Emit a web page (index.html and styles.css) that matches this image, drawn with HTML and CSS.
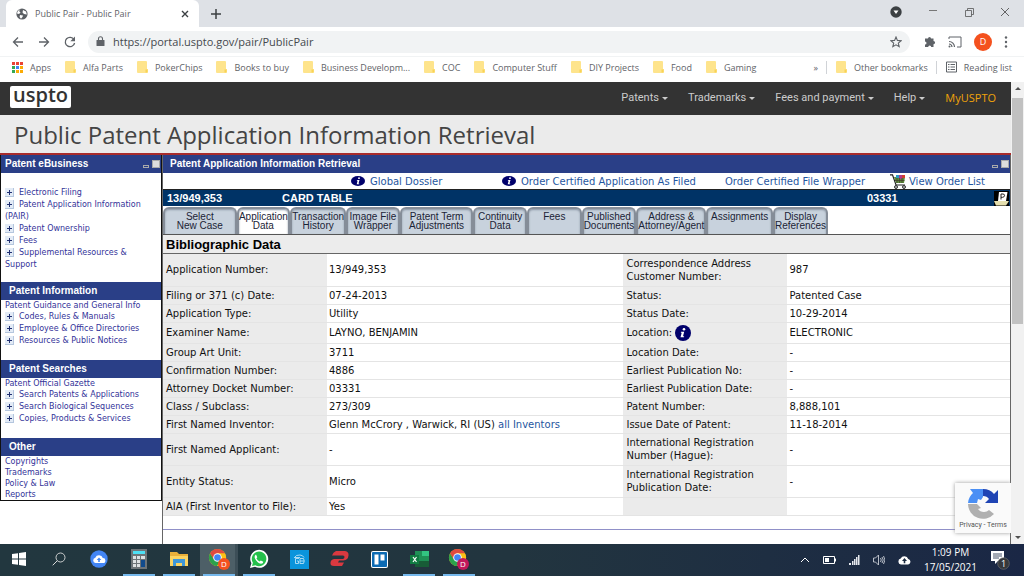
FILE: index.html
```html
<!DOCTYPE html>
<html lang="en">
<head>
  <meta charset="UTF-8" />
  <meta name="viewport" content="width=device-width, initial-scale=1" />
  <title>Public Pair - Public Pair</title>
  <link rel="stylesheet" href="styles.css">
</head>
<body>

<svg class="defs" aria-hidden="true">
  <symbol id="folder" viewBox="0 0 11 12">
    <path d="M1 0h8q1 0 1 1v7h1v3q0 1-1 1H1q-1 0-1-1V1q0-1 1-1z" fill="#fee48c"/>
    <path d="M8.500 8.500h2v3h-2z" fill="#f9d355"/>
  </symbol>
  <symbol id="info" viewBox="0 0 16 16">
    <circle cx="8" cy="8" r="8" fill="#00006b"/>
    <circle cx="9" cy="4.200" r="1.300" fill="#fff"/>
    <path d="M6 6.800h3.200L8 11.300h1.200l-.3 1H5.500l1.200-4.500H5.800z" fill="#fff"/>
  </symbol>
  <symbol id="plus" viewBox="0 0 9 9">
    <path d="M0 0h9v9H0z" fill="#b4c6de"/>
    <path d="M0 0h8v8H0z" fill="#e3ebf6"/>
    <path d="M4 2h1v2h2v1H5v2H4V5H2V4h2z" fill="#1f2f72"/>
  </symbol>
  <symbol id="chrome" viewBox="0 0 20 20">
    <circle cx="10" cy="10" r="9" fill="#fbc116"/>
    <path d="M2.200 5.500A9 9 0 0 0 9.500 19L13.500 12 10 10 6.500 12z" fill="#2ba24c"/>
    <path d="M17.800 5.500H10L14 12l-4 7a9 9 0 0 0 7.800-13.500z" fill="#fbc116"/>
    <path d="M10 5.500h7.800A9 9 0 0 0 2.200 5.500L6 12z" fill="#e04a3f"/>
    <circle cx="10" cy="10" r="4.500" fill="#fff"/>
    <circle cx="10" cy="10" r="3.500" fill="#4285f4"/>
  </symbol>
</svg>

<header class="browser">
  <div class="tabstrip">
    <div class="browser-tab">
      <svg width="12" height="12" viewBox="0 0 12 12"><circle cx="6" cy="6" r="5.600" fill="#5b5f64"/><path d="M4.500 1.200L3 3l1.500 1.500L3 6 1 5.500Q1.200 2.500 4.500 1.200zM7 2l3 1.500.8 3L8 6 6.500 4.500zM4 7l3 .5-.5 1.500L5 10.700 3.600 9z" fill="#fff"/></svg>
      <span class="tab-title">Public Pair - Public Pair</span>
      <button class="icon-btn" aria-label="Close tab"><svg width="8" height="8" viewBox="0 0 8 8"><path d="M1 1l6 6M7 1L1 7" stroke="#3c4043" stroke-width="1.400"/></svg></button>
    </div>
    <button class="icon-btn" aria-label="New tab"><svg width="10" height="10" viewBox="0 0 10 10"><path d="M5 0v10M0 5h10" stroke="#3c4043" stroke-width="1.500"/></svg></button>
    <div class="window-controls">
      <button class="icon-btn" aria-label="Search tabs"><svg width="12" height="12" viewBox="0 0 12 12"><circle cx="6" cy="6" r="5.700" fill="#3c4043"/><path d="M3.500 4.500h5L6 8z" fill="#fff"/></svg></button>
      <button class="icon-btn" aria-label="Minimize"><svg width="10" height="10" viewBox="0 0 10 10"><path d="M1 3.500h8" stroke="#777"/></svg></button>
      <button class="icon-btn" aria-label="Restore"><svg width="10" height="10" viewBox="0 0 10 10"><path d="M1.500 3.500h6v6h-6zM3.500 3.500v-2h6v6h-2" fill="none" stroke="#555" stroke-width=".8"/></svg></button>
      <button class="icon-btn" aria-label="Close"><svg width="10" height="10" viewBox="0 0 10 10"><path d="M1 1l8 8M9 1L1 9" stroke="#555" stroke-width=".9"/></svg></button>
    </div>
  </div>

  <div class="toolbar">
    <button class="icon-btn" aria-label="Back"><svg width="12" height="12" viewBox="0 0 12 12"><path d="M11 6H1.500M6 1.500L1.500 6 6 10.500" fill="none" stroke="#5f6368" stroke-width="1.300"/></svg></button>
    <button class="icon-btn" aria-label="Forward"><svg width="12" height="12" viewBox="0 0 12 12"><path d="M1 6h9.500M6 1.500L10.500 6 6 10.500" fill="none" stroke="#5f6368" stroke-width="1.300"/></svg></button>
    <button class="icon-btn" aria-label="Reload"><svg width="12" height="12" viewBox="0 0 12 12"><path d="M10 3.500A4.700 4.700 0 1 0 10.600 7" fill="none" stroke="#5f6368" stroke-width="1.300"/><path d="M11 .5v4.700H6.300z" fill="#5f6368"/></svg></button>
    <div class="omnibox">
      <svg width="9" height="11" viewBox="0 0 9 11"><path d="M1 4h7q.5 0 .5.500v5q0 .5-.5.500H1q-.5 0-.5-.5v-5Q.500 4 1 4z" fill="#5f6368"/><path d="M2.500 4V2.800a2 2 0 0 1 4 0V4" fill="none" stroke="#5f6368" stroke-width="1.100"/></svg>
      <input type="text" class="url" aria-label="Address" value="https://portal.uspto.gov/pair/PublicPair">
      <button class="icon-btn" aria-label="Bookmark"><svg width="12" height="12" viewBox="0 0 12 12"><path d="M6 1l1.400 3.400 3.700.3-2.800 2.400.9 3.600L6 8.800l-3.200 1.900.9-3.600L.9 4.700l3.700-.3z" fill="none" stroke="#5f6368" stroke-width="1.100"/></svg></button>
    </div>
    <div class="toolbar-end">
      <button class="icon-btn" aria-label="Extensions"><svg width="12" height="12" viewBox="0 0 12 12"><path d="M4 2.500a1.500 1.500 0 0 1 3 0h2.500V5a1.600 1.600 0 0 1 0 3.200V11H7.200a1.500 1.500 0 0 0-3 0H1V8.500a1.500 1.500 0 0 0 0-3v-3z" fill="#5f6368"/></svg></button>
      <button class="icon-btn" aria-label="Cast"><svg width="14" height="12" viewBox="0 0 14 12"><path d="M1 3V1h12v10H9" fill="none" stroke="#5f6368"/><path d="M1 5.500A5.500 5.500 0 0 1 6.500 11M1 8a3 3 0 0 1 3 3" fill="none" stroke="#5f6368" stroke-width="1.200"/><circle cx="1.500" cy="10.500" r="1" fill="#5f6368"/></svg></button>
      <button class="avatar" aria-label="Profile">D</button>
      <button class="icon-btn" aria-label="Menu"><svg width="4" height="12" viewBox="0 0 4 12"><g fill="#5f6368"><circle cx="2" cy="1.500" r="1.200"/><circle cx="2" cy="6" r="1.200"/><circle cx="2" cy="10.500" r="1.200"/></g></svg></button>
    </div>
  </div>

  <nav class="bookmarks" aria-label="Bookmarks">
    <a href="#"><svg width="11" height="11" viewBox="0 0 11 11"><path d="M0 0h3v3H0zM4 0h3v3H4zM8 0h3v3H8z" fill="#ea4335"/><path d="M0 4h3v3H0zM0 8h3v3H0z" fill="#34a853"/><path d="M4 4h3v3H4z" fill="#4285f4"/><path d="M8 4h3v3H8zM4 8h3v3H4zM8 8h3v3H8z" fill="#fbab05"/></svg>Apps</a>
    <a href="#"><svg width="11" height="12"><use href="#folder"/></svg>Alfa Parts</a>
    <a href="#"><svg width="11" height="12"><use href="#folder"/></svg>PokerChips</a>
    <a href="#"><svg width="11" height="12"><use href="#folder"/></svg>Books to buy</a>
    <a href="#"><svg width="11" height="12"><use href="#folder"/></svg>Business Developm...</a>
    <a href="#"><svg width="11" height="12"><use href="#folder"/></svg>COC</a>
    <a href="#"><svg width="11" height="12"><use href="#folder"/></svg>Computer Stuff</a>
    <a href="#"><svg width="11" height="12"><use href="#folder"/></svg>DIY Projects</a>
    <a href="#"><svg width="11" height="12"><use href="#folder"/></svg>Food</a>
    <a href="#"><svg width="11" height="12"><use href="#folder"/></svg>Gaming</a>
    <div class="bookmarks-end">
      <button class="more" aria-label="More bookmarks">»</button>
      <a href="#" class="split"><svg width="11" height="12"><use href="#folder"/></svg>Other bookmarks</a>
      <a href="#" class="split"><svg width="11" height="12" viewBox="0 0 11 12"><path d="M.5 1h10v10H.5z" fill="none" stroke="#5f6368"/><path d="M2 3.500h1.500M4.500 3.500H9M2 6h1.500M4.500 6H9M2 8.500h1.500M4.500 8.500H9" stroke="#5f6368"/></svg>Reading list</a>
    </div>
  </nav>
</header>

<div class="viewport">
  <div class="page">
    <div class="site-header">
      <a href="#" class="logo">uspto</a>
      <nav class="site-nav" aria-label="Site">
        <button>Patents<i class="caret"></i></button>
        <button>Trademarks<i class="caret"></i></button>
        <button>Fees and payment<i class="caret"></i></button>
        <button>Help<i class="caret"></i></button>
        <a href="#" class="my-uspto">MyUSPTO</a>
      </nav>
    </div>
    <h1>Public Patent Application Information Retrieval</h1>

    <div class="frames">
      <aside class="sidebar">
        <div class="sidebar-box">
          <h2 class="bar">Patent eBusiness <span class="box-controls"><i class="min"></i><i class="max"></i></span></h2>
          <ul class="ebusiness">
            <li><svg class="plus"><use href="#plus"/></svg><a href="#">Electronic Filing</a></li>
            <li><svg class="plus"><use href="#plus"/></svg><a href="#">Patent Application Information (PAIR)</a></li>
            <li><svg class="plus"><use href="#plus"/></svg><a href="#">Patent Ownership</a></li>
            <li><svg class="plus"><use href="#plus"/></svg><a href="#">Fees</a></li>
            <li><svg class="plus"><use href="#plus"/></svg><a href="#">Supplemental Resources &amp; Support</a></li>
          </ul>
          <h2 class="bar inner">Patent Information</h2>
          <ul>
            <li class="plain"><a href="#">Patent Guidance and General Info</a></li>
            <li><svg class="plus"><use href="#plus"/></svg><a href="#">Codes, Rules &amp; Manuals</a></li>
            <li><svg class="plus"><use href="#plus"/></svg><a href="#">Employee &amp; Office Directories</a></li>
            <li><svg class="plus"><use href="#plus"/></svg><a href="#">Resources &amp; Public Notices</a></li>
          </ul>
          <h2 class="bar inner">Patent Searches</h2>
          <ul>
            <li class="plain"><a href="#">Patent Official Gazette</a></li>
            <li><svg class="plus"><use href="#plus"/></svg><a href="#">Search Patents &amp; Applications</a></li>
            <li><svg class="plus"><use href="#plus"/></svg><a href="#">Search Biological Sequences</a></li>
            <li><svg class="plus"><use href="#plus"/></svg><a href="#">Copies, Products &amp; Services</a></li>
          </ul>
          <h2 class="bar inner">Other</h2>
          <ul class="other">
            <li class="plain"><a href="#">Copyrights</a></li>
            <li class="plain"><a href="#">Trademarks</a></li>
            <li class="plain"><a href="#">Policy &amp; Law</a></li>
            <li class="plain"><a href="#">Reports</a></li>
          </ul>
        </div>
      </aside>

      <main class="content">
        <h2 class="bar inner">Patent Application Information Retrieval <span class="box-controls"><i class="min"></i><i class="max"></i></span></h2>
        <div class="order-links">
          <a href="#"><svg width="14" height="10" viewBox="0 0 14 10"><ellipse cx="7" cy="5" rx="7" ry="5" fill="#00006b"/><circle cx="8" cy="2.200" r=".9" fill="#fff"/><path d="M6 4h2.500L7.500 7.500h.8l-.2.800H5.700l.9-3.500H5.800z" fill="#fff"/></svg>Global Dossier</a>
          <a href="#"><svg width="14" height="10" viewBox="0 0 14 10"><ellipse cx="7" cy="5" rx="7" ry="5" fill="#00006b"/><circle cx="8" cy="2.200" r=".9" fill="#fff"/><path d="M6 4h2.500L7.500 7.500h.8l-.2.800H5.700l.9-3.500H5.800z" fill="#fff"/></svg>Order Certified Application As Filed</a>
          <a href="#">Order Certified File Wrapper</a>
          <a href="#" class="cart"><svg width="17" height="15" viewBox="0 0 17 15"><path d="M0 .8h2.500L6 11h9" fill="none" stroke="#222" stroke-width="1.200"/><path d="M4 3h11l-1 6H6z" fill="#5c8a3c"/><path d="M6 1h3v3H6z" fill="#2d9bc4"/><path d="M9 1h3v4H9z" fill="#b03a8c"/><path d="M12 1h3v3h-3z" fill="#d23f2e"/><path d="M7 4v5M9.500 4v5M12 4v5M5 6.500h9.500" stroke="#443b2a" stroke-width=".7"/><circle cx="6" cy="13" r="1.500" fill="#bbb" stroke="#333"/><circle cx="14" cy="13" r="1.500" fill="#bbb" stroke="#333"/></svg>View Order List</a>
        </div>
        <div class="case-bar">
          <span>13/949,353</span>
          <span>CARD TABLE</span>
          <span>03331</span>
          <a href="#" aria-label="Printer friendly"><svg width="15" height="15" viewBox="0 0 15 15"><path d="M0 0h15v15H0z" fill="#000"/><path d="M5 1h8.500l-1.500 9H4z" fill="#fff"/><path d="M7 8.500V3h2q1.800.2 1.500 1.700T8.700 6.300H7" fill="none" stroke="#222"/><path d="M0 10h15l-3 4.500H2z" fill="#e5dfae"/></svg></a>
        </div>
        <nav class="tabs" aria-label="Case">
          <a href="#">Select<br>New Case</a>
          <a href="#" class="active">Application<br>Data</a>
          <a href="#">Transaction<br>History</a>
          <a href="#">Image File<br>Wrapper</a>
          <a href="#">Patent Term<br>Adjustments</a>
          <a href="#">Continuity<br>Data</a>
          <a href="#">Fees</a>
          <a href="#">Published<br>Documents</a>
          <a href="#">Address &amp;<br>Attorney/Agent</a>
          <a href="#">Assignments</a>
          <a href="#">Display<br>References</a>
        </nav>
        <h3>Bibliographic Data</h3>
        <table class="biblio">
          <colgroup><col class="col-label"><col class="col-wide"><col class="col-label"><col></colgroup>
          <tr class="tall"><th>Application Number:</th><td>13/949,353</td><th>Correspondence Address Customer Number:</th><td>987</td></tr>
          <tr><th>Filing or 371 (c) Date:</th><td>07-24-2013</td><th>Status:</th><td>Patented Case</td></tr>
          <tr><th>Application Type:</th><td>Utility</td><th>Status Date:</th><td>10-29-2014</td></tr>
          <tr><th>Examiner Name:</th><td>LAYNO, BENJAMIN</td><th>Location: <svg class="info"><use href="#info"/></svg></th><td>ELECTRONIC</td></tr>
          <tr><th>Group Art Unit:</th><td>3711</td><th>Location Date:</th><td>-</td></tr>
          <tr><th>Confirmation Number:</th><td>4886</td><th>Earliest Publication No:</th><td>-</td></tr>
          <tr><th>Attorney Docket Number:</th><td>03331</td><th>Earliest Publication Date:</th><td>-</td></tr>
          <tr><th>Class / Subclass:</th><td>273/309</td><th>Patent Number:</th><td>8,888,101</td></tr>
          <tr><th>First Named Inventor:</th><td>Glenn McCrory , Warwick, RI (US) <a href="#">all Inventors</a></td><th>Issue Date of Patent:</th><td>11-18-2014</td></tr>
          <tr class="tall"><th>First Named Applicant:</th><td>-</td><th>International Registration Number (Hague):</th><td>-</td></tr>
          <tr class="tall"><th>Entity Status:</th><td>Micro</td><th>International Registration Publication Date:</th><td>-</td></tr>
          <tr><th>AIA (First Inventor to File):</th><td>Yes</td><th></th><td></td></tr>
        </table>
        <hr>
      </main>
    </div>

    <div class="recaptcha">
      <svg width="32" height="32" viewBox="0 0 32 32">
        <path d="M1 15A15 15 0 0 1 6 5L3 1h13v8l-2 3-3-1-1 4z" fill="#4a8ff5"/>
        <path d="M16 1q7 0 11 5l4-4v13H18l4-4q-2-3-6-3z" fill="#1f44b4"/>
        <path d="M1 16h9l4 4-3 1q2 3 6 3 3 0 5-2l5 4A15 15 0 0 1 1 16z" fill="#b0b0b0"/>
      </svg>
      <div><a href="#">Privacy</a> - <a href="#">Terms</a></div>
    </div>
  </div>
  <div class="scrollbar"><i class="up"></i><i class="thumb"></i><i class="down"></i></div>
</div>

<footer class="taskbar">
  <div class="apps">
    <button aria-label="Start"><svg width="14" height="14" viewBox="0 0 14 14"><path d="M0 2l6-.8v5.300H0zM7 1l7-1v6.500H7zM0 7.500h6v5.300L0 12zM7 7.500h7V14l-7-1z" fill="#fff"/></svg></button>
    <button aria-label="Search"><svg width="14" height="14" viewBox="0 0 14 14"><circle cx="8.500" cy="5.500" r="4.500" fill="none" stroke="#ddd" stroke-width=".9"/><path d="M5.300 8.700L.7 13.300" stroke="#ddd"/></svg></button>
    <button aria-label="Backup"><svg width="18" height="18" viewBox="0 0 18 18"><circle cx="9" cy="9" r="8.700" fill="#4285f4"/><path d="M5.500 13a2.700 2.700 0 0 1-.2-5.300 4 4 0 0 1 7.500.3 2.500 2.500 0 0 1 .2 5z" fill="#fff"/><path d="M9 7.500L11.300 10H9.800v2H8.200v-2H6.700z" fill="#4285f4"/></svg></button>
    <button class="open" aria-label="Calculator"><svg width="16" height="20" viewBox="0 0 16 20"><path d="M0 0h16v20H0z" fill="#6d7478"/><path d="M2 2h12v3H2z" fill="#4de0f5"/><path d="M2 7h3v3H2zM6 7h3v3H6zM10 7h4v3h-4zM2 11h3v3H2zM6 11h3v3H6zM2 15h3v3H2zM6 15h3v3H6z" fill="#dde1e3"/><path d="M10 11h4v7h-4z" fill="#114b8c"/></svg></button>
    <button class="open" aria-label="File Explorer"><svg width="18" height="16" viewBox="0 0 18 16"><path d="M0 1h7l2 2h9v12H0z" fill="#eab03a"/><path d="M0 5h18v10H0z" fill="#fcd462"/><path d="M3 15V8h12v7h-3v-3H6v3z" fill="#3f97d8"/></svg></button>
    <button class="open current" aria-label="Google Chrome"><svg width="22" height="22" viewBox="0 0 22 22"><use href="#chrome" width="19" height="19"/><circle cx="16" cy="16" r="6" fill="#f4511e"/><text x="16" y="19" class="mark">D</text></svg></button>
    <button class="open" aria-label="WhatsApp"><svg width="20" height="20" viewBox="0 0 20 20"><path d="M1 19l1.400-4.700A9 9 0 1 1 6 17.800z" fill="#fff"/><path d="M3 17l.9-3.200a7.300 7.300 0 1 1 2.500 2.400z" fill="#25c04b"/><path d="M7 5.500l1.300 2.700-.9 1.100q1 2.200 3.200 3.200l1.200-1 2.500 1.200q0 2-2.300 2.100Q8 14.300 5.800 9 5.200 6.400 7 5.500z" fill="#fff"/></svg></button>
    <button aria-label="Design app"><svg width="19" height="19" viewBox="0 0 19 19"><path d="M0 0h19v19H0z" fill="#0a94dc"/><path d="M4 8q2-3.500 6-3 3 .3 4 2.500M5 7.500h5M9 8.500H5.500v5h3v-2.500H7M10 8.500h3.500q1.500 2.500 0 5H10zM10 11h4" fill="none" stroke="#b8e1f5" stroke-width=".9"/></svg></button>
    <button aria-label="Express VPN"><svg width="19" height="16" viewBox="0 0 19 16"><path d="M6 0h9q4 .5 3.500 4.500Q18 9 13.500 9.500H9L8 11.500h6l-2 3.500H4Q0 15 .5 11.500.800 8.500 4 8h9q1.500-.5 1.500-2T13 4.500H2Q3 1 6 0z" fill="#da3940"/></svg></button>
    <button aria-label="Trello"><svg width="17" height="17" viewBox="0 0 17 17"><rect width="17" height="17" rx="2" fill="#fff"/><rect x="1" y="1" width="15" height="15" rx="1" fill="#0c6bb3"/><path d="M3.500 3.500h4v10h-4zM9.500 3.500h4v6h-4z" fill="#fff"/></svg></button>
    <button class="open" aria-label="Excel"><svg width="19" height="18" viewBox="0 0 19 18"><path d="M5 1h14v16H5z" fill="#1f9156"/><path d="M12 1h7v5h-7z" fill="#33c481"/><path d="M5 11h14v6H5z" fill="#185c37"/><path d="M0 5h9v9H0z" fill="#107c41"/><path d="M3 7l3.500 5M6.500 7L3 12" stroke="#fff" stroke-width="1.200"/></svg></button>
    <button class="open" aria-label="Google Chrome, second profile"><svg width="22" height="22" viewBox="0 0 22 22"><use href="#chrome" width="19" height="19"/><circle cx="15" cy="16" r="6" fill="#c2185b"/><text x="15" y="19" class="mark">D</text></svg></button>
  </div>
  <div class="tray">
    <svg width="10" height="6" viewBox="0 0 10 6"><path d="M1 5l4-4 4 4" fill="none" stroke="#fff"/></svg>
    <svg width="13" height="8" viewBox="0 0 13 8"><path d="M.5.500h11v7H.5z" fill="none" stroke="#fff"/><path d="M2 2h4v4H2zM12 2.500h1v3h-1z" fill="#fff"/></svg>
    <svg width="11" height="10" viewBox="0 0 11 10"><path d="M0 8h2v2H0zM3 6h1.500v4H3zM5 4h1.500v6H5zM7 2h1.500v8H7zM9 0h1.500v10H9z" fill="#e6e9ee"/></svg>
    <svg width="12" height="12" viewBox="0 0 12 12"><path d="M.5 4h2l3-3v10l-3-3h-2zM7.500 4q1.500 2 0 4M9 3q2.500 3 0 6M10.500 2q3 4 0 8" fill="none" stroke="#c9ced6" stroke-width=".9"/></svg>
    <svg width="13" height="10" viewBox="0 0 13 10"><path d="M3 9.500A3 3 0 0 1 2.700 3.600a4 4 0 0 1 7.500.4 2.800 2.800 0 0 1 0 5.500z" fill="#fff"/><path d="M6.500 3L9 6H7.300v2.200H5.700V6H4z" fill="#1c2c42"/></svg>
    <div class="clock">1:09 PM<br>17/05/2021</div>
    <button class="notify" aria-label="Notifications"><svg width="20" height="20" viewBox="0 0 20 20"><path d="M1 1h13v10H8l-3 3v-3H1z" fill="#fff"/><path d="M3 4h9M3 6h9M3 8h6" stroke="#1b2a45" stroke-width=".8"/><circle cx="13.500" cy="13.500" r="5.800" fill="#35383c" stroke="#777" stroke-width=".6"/><text x="13.500" y="17" class="mark count">1</text></svg></button>
  </div>
</footer>

</body>
</html>
```
FILE: styles.css
```css
* {
  box-sizing: border-box;
}
body {
  margin: 0;
  height: 100vh;
  display: flex;
  flex-direction: column;
  overflow: hidden;
  background: #fff;
  color: #111;
  font-family: "Open Sans", "Noto Sans", sans-serif;
  font-size: 9px;
}
a {
  color: inherit;
  text-decoration: none;
}
button {
  border: 0;
  padding: 0;
  background: none;
  color: inherit;
  font: inherit;
}
svg {
  display: block;
  flex: none;
}
h1, h2, h3, ul {
  margin: 0;
  padding: 0;
}
.defs {
  position: absolute;
  width: 0;
  height: 0;
}
.mark {
  fill: #fff;
  font-size: 8px;
  text-anchor: middle;
}
.count {
  font-size: 9px;
}

/* browser */
.tabstrip {
  display: flex;
  align-items: center;
  height: 27px;
  padding-left: 6px;
  background: #dee1e6;
}
.browser-tab {
  display: flex;
  align-items: center;
  gap: 7px;
  width: 193px;
  height: 27px;
  padding: 0 10px;
  margin-right: 12px;
  background: #fff;
  border-radius: 6px 6px 0 0;
  color: #5f6368;
}
.tab-title {
  flex: 1;
  white-space: nowrap;
}
.window-controls {
  display: flex;
  align-items: center;
  gap: 26px;
  margin-left: auto;
  padding: 0 14px 3px 0;
}
.toolbar {
  display: flex;
  align-items: center;
  gap: 14px;
  height: 29px;
  padding: 0 16px 0 12px;
}
.omnibox {
  flex: 1;
  display: flex;
  align-items: center;
  gap: 8px;
  height: 22px;
  padding: 0 8px;
  margin-left: -2px;
  border-radius: 11px;
  background: #f1f3f4;
}
.url {
  flex: 1;
  min-width: 0;
  border: 0;
  padding: 0;
  background: none;
  color: #45494d;
  font-family: inherit;
  font-size: 11px;
}
.toolbar-end {
  display: flex;
  align-items: center;
  gap: 12px;
}
.avatar {
  width: 18px;
  height: 18px;
  border-radius: 50%;
  background: #f4511e;
  color: #fff;
  text-align: center;
}
.bookmarks {
  display: flex;
  align-items: center;
  gap: 14px;
  height: 26px;
  padding: 0 12px 5px;
  border-top: 1px solid #f1f3f4;
  color: #5f6368;
  white-space: nowrap;
}
.bookmarks a {
  display: flex;
  align-items: center;
  gap: 7px;
}
.bookmarks-end {
  display: flex;
  align-items: center;
  gap: 8px;
  margin-left: auto;
}
.bookmarks .split {
  padding-left: 9px;
  border-left: 1px solid #d0d3d7;
}

/* page */
.viewport {
  flex: 1;
  min-height: 0;
  display: flex;
}
.page {
  flex: 1;
  min-width: 0;
  position: relative;
  display: flex;
  flex-direction: column;
  overflow: hidden;
}
.site-header {
  display: flex;
  justify-content: space-between;
  align-items: flex-start;
  height: 33px;
  padding: 4px 15px 0 10px;
  background: #333;
}
.logo {
  height: 22px;
  padding: 0 3px;
  border-radius: 2px;
  background: #fff;
  color: #333;
  font-size: 20px;
  font-weight: 600;
  line-height: 18px;
}
.site-nav {
  display: flex;
  gap: 20px;
  color: #ccc;
  font: 11px/24px Roboto, Arial, sans-serif;
}
.caret {
  display: inline-block;
  margin-left: 3px;
  vertical-align: middle;
  border: 3px solid transparent;
  border-top-color: #ccc;
  border-bottom: 0;
}
.my-uspto {
  color: #f0a30a;
  font-family: "Open Sans", sans-serif;
}
h1 {
  height: 40px;
  padding-left: 14px;
  border-bottom: 2px solid #a82c2c;
  background: #ebebeb;
  color: #444;
  font-size: 24px;
  font-weight: 400;
  line-height: 40px;
}
.frames {
  flex: 1;
  min-height: 0;
  display: flex;
}
.bar {
  display: flex;
  align-items: center;
  height: 18px;
  padding-left: 4px;
  background: #2a3f87;
  color: #fff;
  font: bold 10px/18px "Liberation Sans", Arial, sans-serif;
}
.bar.inner {
  padding-left: 8px;
}
.content .bar.inner {
  padding-left: 7px;
}
.box-controls {
  display: flex;
  align-items: flex-end;
  gap: 3px;
  margin-left: auto;
  padding-right: 1px;
}
.box-controls .min {
  width: 6px;
  height: 3px;
  border: 1px solid #aaa;
}
.box-controls .max {
  width: 8px;
  height: 8px;
  border: 1px solid #aaa;
  background: #ddd;
}

.sidebar {
  width: 162px;
}
.sidebar-box {
  border: 1px solid #111;
  border-top: 0;
}
.sidebar ul {
  padding: 0 4px 13px;
  list-style: none;
  color: #333399;
  font: 8px/12px "DejaVu Sans", Verdana, sans-serif;
}
.sidebar .ebusiness {
  padding-top: 14px;
  padding-bottom: 11px;
}
.sidebar .other {
  padding-bottom: 0;
}
.sidebar .plain {
  line-height: 11px;
}
.plus {
  display: inline-block;
  width: 9px;
  height: 9px;
  margin-right: 5px;
  vertical-align: -2px;
}

.content {
  flex: 1;
  min-width: 0;
  border-left: 1px solid #666;
  border-right: 1px solid #666;
}
.order-links {
  display: grid;
  grid-template-columns: 188fr 151fr 223fr 165fr 120fr;
  align-items: center;
  height: 16px;
  color: #1f56a0;
  font: 10px/13px "DejaVu Sans", Verdana, sans-serif;
  white-space: nowrap;
}
.order-links a {
  display: flex;
  align-items: center;
  gap: 5px;
}
.order-links a:first-child {
  grid-column-start: 2;
}
.order-links .cart {
  gap: 2px;
}
.case-bar {
  display: grid;
  grid-template-columns: 115fr 585fr 127fr 16px;
  align-items: center;
  height: 17px;
  padding-left: 4px;
  background: #003366;
  border-top: 1px solid #222;
  color: #fff;
  font: bold 11px/15px "Liberation Sans", Arial, sans-serif;
}
.tabs {
  display: grid;
  grid-template-columns: 74fr 54fr 54fr 54fr 74fr 54fr 55fr 54fr 69fr 67fr 55fr 183fr;
  height: 29px;
  padding-top: 1px;
  border-bottom: 1px solid #555;
}
.tabs a {
  display: flex;
  justify-content: center;
  padding-top: 3px;
  border: 2px solid #858d98;
  border-bottom: 0;
  border-radius: 6px 6px 0 0;
  background: #c8d2dd;
  box-shadow: inset 0 1px 2px #8a95a3;
  color: #1b2436;
  font: 10px/9px "Liberation Sans", Arial, sans-serif;
  text-align: center;
  white-space: nowrap;
}
.tabs .active {
  background: #fff;
}
h3 {
  height: 19px;
  padding-left: 3px;
  border-bottom: 1px solid #666;
  background: #ececec;
  color: #000;
  font: bold 13px/19px "Liberation Sans", Arial, sans-serif;
}
.biblio {
  width: 100%;
  table-layout: fixed;
  border-collapse: collapse;
  font: 10px/13px "DejaVu Sans", Verdana, sans-serif;
}
.col-label {
  width: 164px;
}
.col-wide {
  width: 35%;
}
.biblio th, .biblio td {
  padding: 2px;
  border-bottom: 1px solid #e4e4e4;
  font-weight: 400;
  text-align: left;
}
.biblio th {
  padding-left: 3px;
  background: #ebebeb;
}
.biblio tr {
  height: 18px;
}
.biblio .tall {
  height: 32px;
}
.biblio td a {
  color: #1f56a0;
}
.info {
  display: inline-block;
  width: 16px;
  height: 16px;
  vertical-align: middle;
}
hr {
  margin: 13px 0 0;
  border: 0;
  border-top: 1px solid #9090c8;
}

.recaptcha {
  position: absolute;
  right: 0;
  bottom: 11px;
  width: 56px;
  padding: 5px 0 3px;
  background: #fafafa;
  box-shadow: 0 0 4px #999;
  color: #555;
  font: 7px/10px Roboto, sans-serif;
  text-align: center;
}
.recaptcha svg {
  margin: 0 auto;
}

.scrollbar {
  display: flex;
  flex-direction: column;
  align-items: center;
  width: 13px;
  padding: 5px 0;
  background: #f1f1f1;
}
.scrollbar .up, .scrollbar .down {
  border: 3px solid transparent;
}
.scrollbar .up {
  border-top: 0;
  border-bottom-color: #505050;
}
.scrollbar .down {
  margin-top: auto;
  border-bottom: 0;
  border-top-color: #505050;
}
.scrollbar .thumb {
  width: 11px;
  height: 50%;
  margin-top: 8px;
  background: #c1c1c1;
}

/* taskbar */
.taskbar {
  display: flex;
  justify-content: space-between;
  height: 32px;
  background: linear-gradient(90deg, #22373f, #22353f 50%, #1a2745);
  color: #fff;
}
.apps {
  display: flex;
  gap: 8px;
  padding-left: 3px;
}
.apps button {
  display: flex;
  align-items: center;
  justify-content: center;
  width: 32px;
  border-bottom: 2px solid transparent;
}
.apps .open {
  border-bottom-color: #76b9ed;
}
.apps .current {
  background: #4d5f67;
  box-shadow: -3px 0 #4d5f67, 3px 0 #3c4e57;
}
.tray {
  display: flex;
  align-items: center;
  gap: 13px;
  padding-right: 14px;
}
.clock {
  font-size: 10px;
  line-height: 15px;
  text-align: center;
}
```
